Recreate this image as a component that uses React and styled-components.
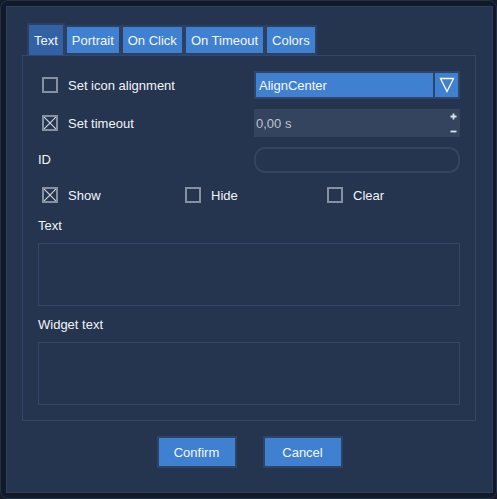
import React from "react";
import styled, { createGlobalStyle } from "styled-components";

const Global = createGlobalStyle`
  html, body { margin: 0; padding: 0; background: #141b29; }
  body { font-family: "Liberation Sans", Arial, sans-serif; font-size: 13px; }
  * { box-sizing: border-box; }
`;

const Frame = styled.div`
  width: 497px;
  height: 499px;
  background: #131a27;
  border-radius: 8px;
  border: 1px solid #233049;
  padding: 5px 3px 5px 5px;
`;

const Panel = styled.div`
  width: 487px;
  height: 487px;
  background: #25344f;
  border: 1px solid #2f405f;
  padding: 16px 15px 0 15px;
  display: flex;
  flex-direction: column;
`;

const TabBar = styled.div`
  display: flex;
  align-items: flex-end;
  margin-left: 5px;
`;

const Tab = styled.div`
  height: ${(p) => (p.$active ? "32px" : "30px")};
  padding: 0 5px;
  border: 2px solid #2c4064;
  border-bottom-width: ${(p) => (p.$active ? "0" : "2px")};
  background: ${(p) => (p.$active ? "#3262a4" : "#4080d0")};
  color: #f4f7fb;
  display: flex;
  align-items: center;
  white-space: nowrap;
`;

const Pane = styled.div`
  width: 454px;
  height: 366px;
  border: 1px solid #34466a;
  padding: 15px 15px 0 15px;
  display: flex;
  flex-direction: column;
`;

const FormRow = styled.div`
  display: grid;
  grid-template-columns: 216px 206px;
  align-items: center;
  height: ${(p) => p.$h}px;
  margin-top: ${(p) => p.$mt || 0}px;
`;

const CheckRow = styled.div`
  display: grid;
  grid-template-columns: 143px 142px auto;
  align-items: center;
  height: 26px;
  margin-top: ${(p) => p.$mt || 0}px;
  padding-left: 4px;
`;

const CheckItem = styled.label`
  display: flex;
  align-items: center;
  gap: 10px;
  color: #f2f5f9;
  padding-left: ${(p) => p.$indent || 0}px;
`;

const Box = styled.span`
  width: 16px;
  height: 16px;
  border: 2px solid #8690a0;
  display: inline-flex;
  align-items: center;
  justify-content: center;
`;

const Label = styled.div`
  color: #f2f5f9;
  height: 18px;
  line-height: 18px;
  margin-top: ${(p) => p.$mt || 0}px;
  padding-left: ${(p) => p.$indent || 0}px;
`;

const Select = styled.div`
  height: 28px;
  border: 2px solid #2e4468;
  display: flex;
  background: #2e4468;
`;

const SelectValue = styled.div`
  flex: 1;
  background: #4080d0;
  color: #f7f9fc;
  display: flex;
  align-items: center;
  padding-left: 3px;
`;

const SelectArrow = styled.div`
  width: 23px;
  margin-left: 2px;
  background: #4080d0;
  display: flex;
  align-items: center;
  justify-content: center;
`;

const Spin = styled.div`
  height: 28px;
  background: #34445f;
  display: flex;
  align-items: center;
  justify-content: space-between;
  padding: 0 3px 0 2px;
  color: #bcc5d2;
`;

const SpinButtons = styled.div`
  display: flex;
  flex-direction: column;
  justify-content: space-between;
  height: 20px;
`;

const RoundInput = styled.div`
  height: 26px;
  border: 2px solid #34445f;
  border-radius: 11px;
`;

const TextArea = styled.div`
  height: 63px;
  border: 1px solid #34466a;
  margin-top: ${(p) => p.$mt || 0}px;
`;

const Buttons = styled.div`
  display: flex;
  justify-content: center;
  gap: 26px;
  margin-top: 15px;
`;

const Button = styled.div`
  width: 80px;
  height: 32px;
  border: 2px solid #2e4466;
  background: #4080d0;
  color: #f4f7fb;
  display: flex;
  align-items: center;
  justify-content: center;
`;

const Check = ({ checked }) => (
  <Box>
    {checked && (
      <svg width="12" height="12" viewBox="0 0 12 12">
        <line x1="0" y1="0" x2="12" y2="12" stroke="#c9d0da" strokeWidth="1.2" />
        <line x1="12" y1="0" x2="0" y2="12" stroke="#c9d0da" strokeWidth="1.2" />
      </svg>
    )}
  </Box>
);

export default function App() {
  return (
    <>
      <Global />
      <Frame>
        <Panel>
          <TabBar>
            <Tab $active>Text</Tab>
            <Tab>Portrait</Tab>
            <Tab>On Click</Tab>
            <Tab>On Timeout</Tab>
            <Tab>Colors</Tab>
          </TabBar>
          <Pane>
            <FormRow $h={28}>
              <CheckItem $indent={4}>
                <Check />
                Set icon alignment
              </CheckItem>
              <Select>
                <SelectValue>AlignCenter</SelectValue>
                <SelectArrow>
                  <svg width="16" height="16" viewBox="0 0 16 16">
                    <polygon points="1.5,1.5 14.5,1.5 8,14.5" fill="none" stroke="#ffffff" strokeWidth="1.3" />
                  </svg>
                </SelectArrow>
              </Select>
            </FormRow>
            <FormRow $h={28} $mt={10}>
              <CheckItem $indent={4}>
                <Check checked />
                Set timeout
              </CheckItem>
              <Spin>
                <span>0,00 s</span>
                <SpinButtons>
                  <svg width="7" height="7" viewBox="0 0 7 7">
                    <path d="M3.5 0.5V6.5M0.5 3.5H6.5" stroke="#dde3eb" strokeWidth="1.8" />
                  </svg>
                  <svg width="7" height="3" viewBox="0 0 7 3">
                    <path d="M0.5 1.5H6.5" stroke="#dde3eb" strokeWidth="1.8" />
                  </svg>
                </SpinButtons>
              </Spin>
            </FormRow>
            <FormRow $h={26} $mt={10}>
              <Label $indent={0}>ID</Label>
              <RoundInput />
            </FormRow>
            <CheckRow $mt={9}>
              <CheckItem>
                <Check checked />
                Show
              </CheckItem>
              <CheckItem>
                <Check />
                Hide
              </CheckItem>
              <CheckItem>
                <Check />
                Clear
              </CheckItem>
            </CheckRow>
            <Label $mt={9}>Text</Label>
            <TextArea $mt={8} />
            <Label $mt={10}>Widget text</Label>
            <TextArea $mt={8} />
          </Pane>
          <Buttons>
            <Button>Confirm</Button>
            <Button>Cancel</Button>
          </Buttons>
        </Panel>
      </Frame>
    </>
  );
}
